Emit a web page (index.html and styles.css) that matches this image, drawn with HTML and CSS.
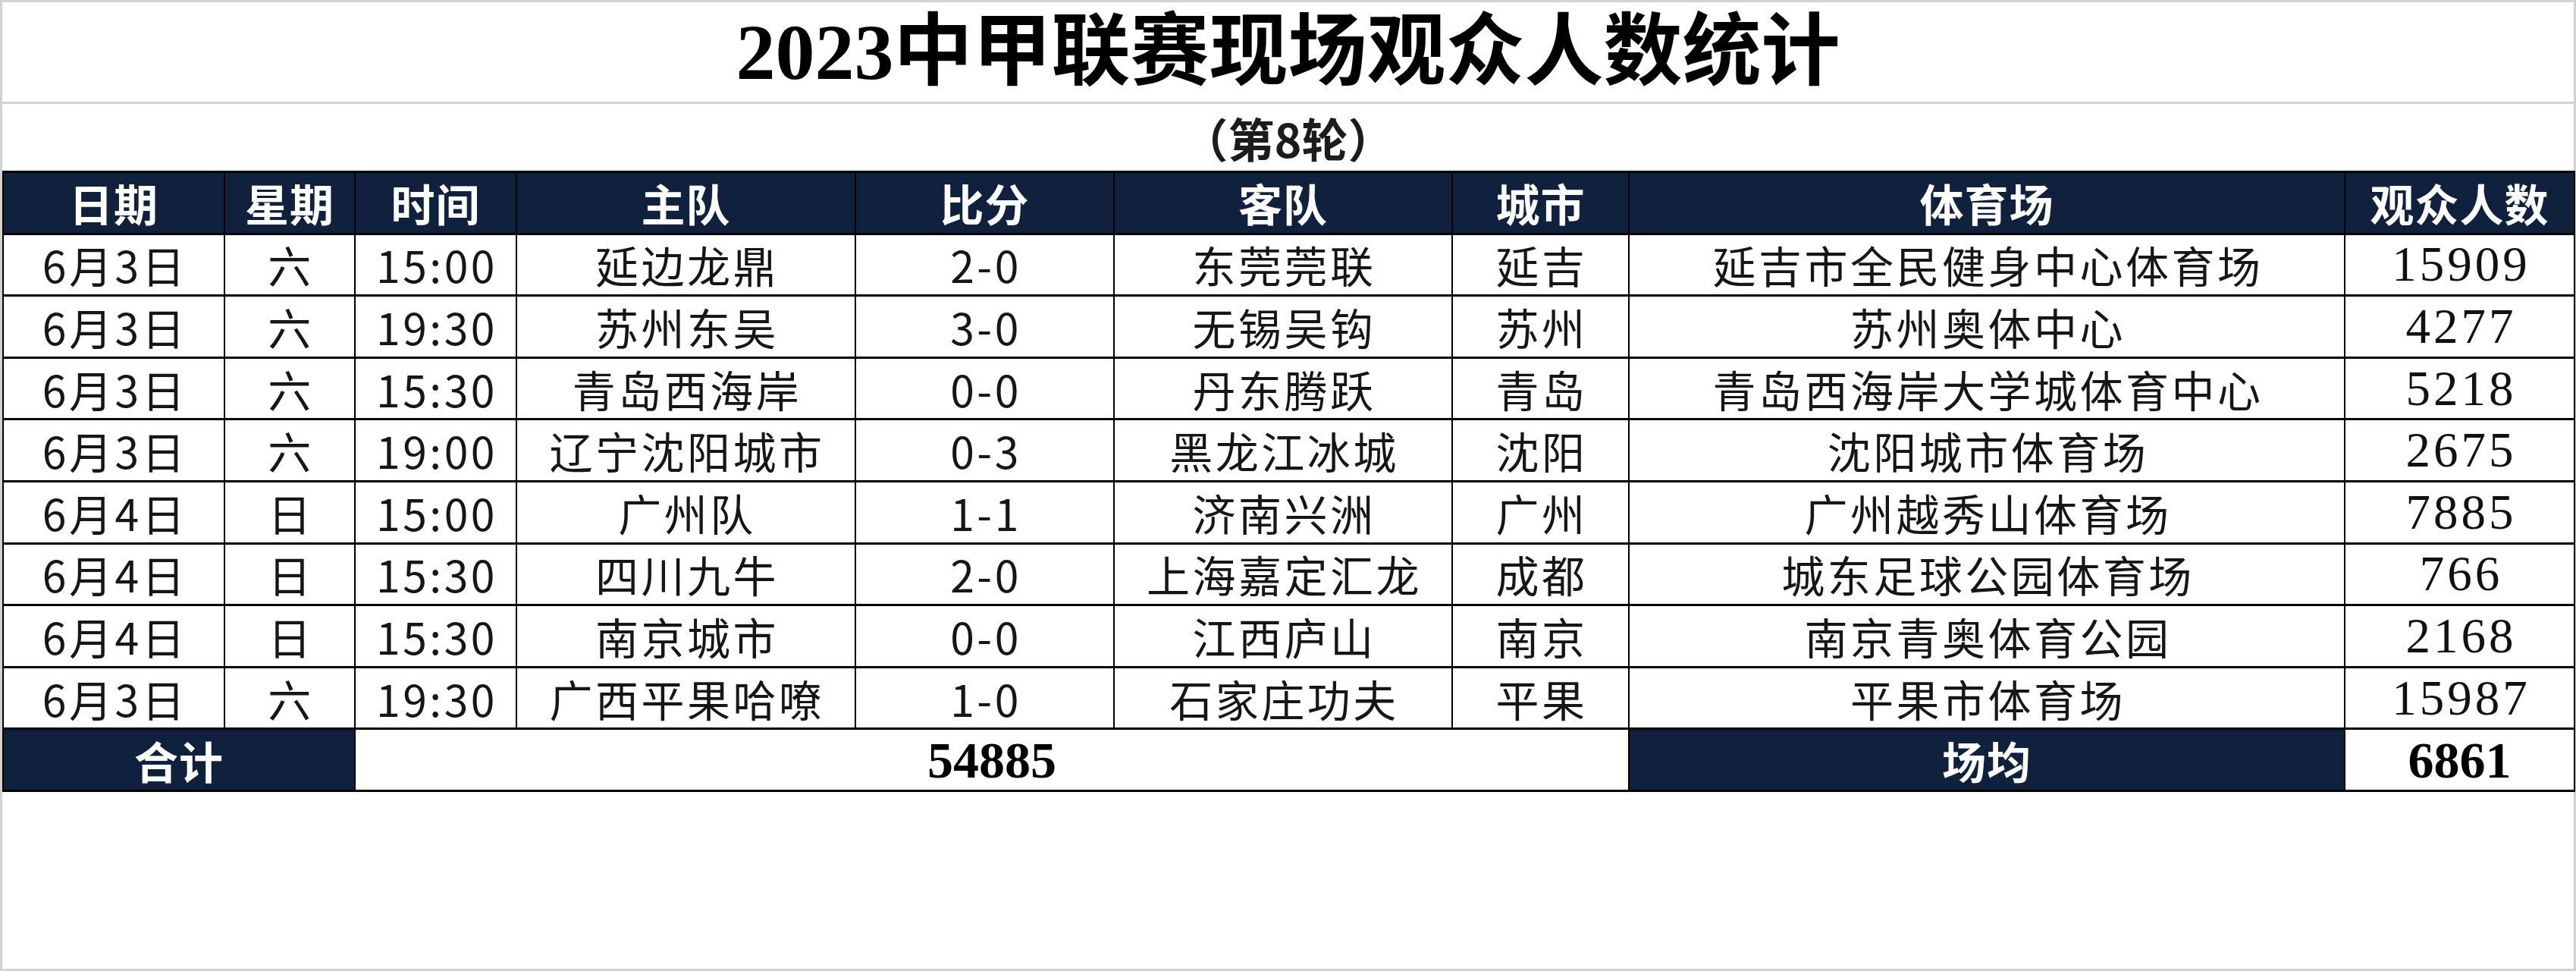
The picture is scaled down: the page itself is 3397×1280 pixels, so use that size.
FILE: index.html
```html
<!DOCTYPE html>
<html lang="zh-CN">
<head>
<meta charset="utf-8">
<title>2023中甲联赛现场观众人数统计</title>
<link rel="stylesheet" href="styles.css">
</head>
<body>
<div class="sheet">
  <div class="title"><span class="num">2023</span>中甲联赛现场观众人数统计</div>
  <div class="subtitle">（第8轮）</div>
  <table class="stats">
    <colgroup>
      <col class="c1"><col class="c2"><col class="c3"><col class="c4"><col class="c5"><col class="c6"><col class="c7"><col class="c8"><col class="c9">
    </colgroup>
    <thead>
      <tr class="head">
        <th>日期</th><th>星期</th><th>时间</th><th>主队</th><th>比分</th><th>客队</th><th>城市</th><th>体育场</th><th>观众人数</th>
      </tr>
    </thead>
    <tbody>
      <tr><td>6月3日</td><td>六</td><td>15:00</td><td>延边龙鼎</td><td>2-0</td><td>东莞莞联</td><td>延吉</td><td>延吉市全民健身中心体育场</td><td class="att">15909</td></tr>
      <tr><td>6月3日</td><td>六</td><td>19:30</td><td>苏州东吴</td><td>3-0</td><td>无锡吴钩</td><td>苏州</td><td>苏州奥体中心</td><td class="att">4277</td></tr>
      <tr><td>6月3日</td><td>六</td><td>15:30</td><td>青岛西海岸</td><td>0-0</td><td>丹东腾跃</td><td>青岛</td><td>青岛西海岸大学城体育中心</td><td class="att">5218</td></tr>
      <tr><td>6月3日</td><td>六</td><td>19:00</td><td>辽宁沈阳城市</td><td>0-3</td><td>黑龙江冰城</td><td>沈阳</td><td>沈阳城市体育场</td><td class="att">2675</td></tr>
      <tr><td>6月4日</td><td>日</td><td>15:00</td><td>广州队</td><td>1-1</td><td>济南兴洲</td><td>广州</td><td>广州越秀山体育场</td><td class="att">7885</td></tr>
      <tr><td>6月4日</td><td>日</td><td>15:30</td><td>四川九牛</td><td>2-0</td><td>上海嘉定汇龙</td><td>成都</td><td>城东足球公园体育场</td><td class="att">766</td></tr>
      <tr><td>6月4日</td><td>日</td><td>15:30</td><td>南京城市</td><td>0-0</td><td>江西庐山</td><td>南京</td><td>南京青奥体育公园</td><td class="att">2168</td></tr>
      <tr><td>6月3日</td><td>六</td><td>19:30</td><td>广西平果哈嘹</td><td>1-0</td><td>石家庄功夫</td><td>平果</td><td>平果市体育场</td><td class="att">15987</td></tr>
      <tr class="total">
        <th colspan="2">合计</th>
        <td colspan="5" class="sum">54885</td>
        <th>场均</th>
        <td class="sum">6861</td>
      </tr>
    </tbody>
  </table>
</div>
</body>
</html>
```

FILE: styles.css
```css
html, body {
  margin: 0;
  padding: 0;
  background: #ffffff;
}

body {
  width: 3397px;
  height: 1280px;
  overflow: hidden;
}

.sheet {
  box-sizing: border-box;
  width: 3397px;
  height: 1280px;
  border: 3px solid #d2d2d2;
  background: #ffffff;
}

.title {
  height: 131px;
  border-bottom: 3px solid #d2d2d2;
  display: flex;
  align-items: center;
  justify-content: center;
  font-family: "Liberation Serif", "Noto Sans CJK SC", serif;
  font-weight: 700;
  font-size: 104px;
  color: #000;
  line-height: 1;
}

.title .num {
  font-family: "Liberation Serif", serif;
}

.subtitle {
  height: 88px;
  display: flex;
  align-items: center;
  justify-content: center;
  font-family: "Noto Sans CJK SC", sans-serif;
  font-weight: 700;
  font-size: 61px;
  color: #1c1c1c;
  line-height: 1;
}

.stats {
  width: 3391px;
  border-collapse: collapse;
  table-layout: fixed;
}

.c1 { width: 292px; }
.c2 { width: 172px; }
.c3 { width: 213px; }
.c4 { width: 447px; }
.c5 { width: 341px; }
.c6 { width: 446px; }
.c7 { width: 233px; }
.c8 { width: 944px; }
.c9 { width: 303px; }

.stats tr {
  height: 81.6px;
}

.stats th,
.stats td {
  padding: 0;
  text-align: center;
  vertical-align: middle;
  border-left: 2px solid #000;
  border-right: 2px solid #000;
  border-top: 3px solid #000;
  border-bottom: 3px solid #000;
  white-space: nowrap;
  overflow: hidden;
  line-height: 1;
}

.stats th {
  background: #10213d;
  color: #ffffff;
  font-family: "Noto Sans CJK SC", sans-serif;
  font-weight: 700;
  font-size: 58px;
  letter-spacing: 1px;
}

.stats td {
  font-family: "Noto Sans CJK SC", sans-serif;
  font-weight: 400;
  font-size: 57px;
  letter-spacing: 3.5px;
  padding-left: 3px;
  color: #161616;
}

.stats td.att {
  font-family: "Liberation Serif", serif;
  font-size: 65px;
  letter-spacing: 4px;
  padding-left: 4px;
  color: #111;
}

.total td.sum {
  font-family: "Liberation Serif", serif;
  font-weight: 700;
  font-size: 68px;
  letter-spacing: 0;
  padding-left: 0;
  color: #000;
}
```
